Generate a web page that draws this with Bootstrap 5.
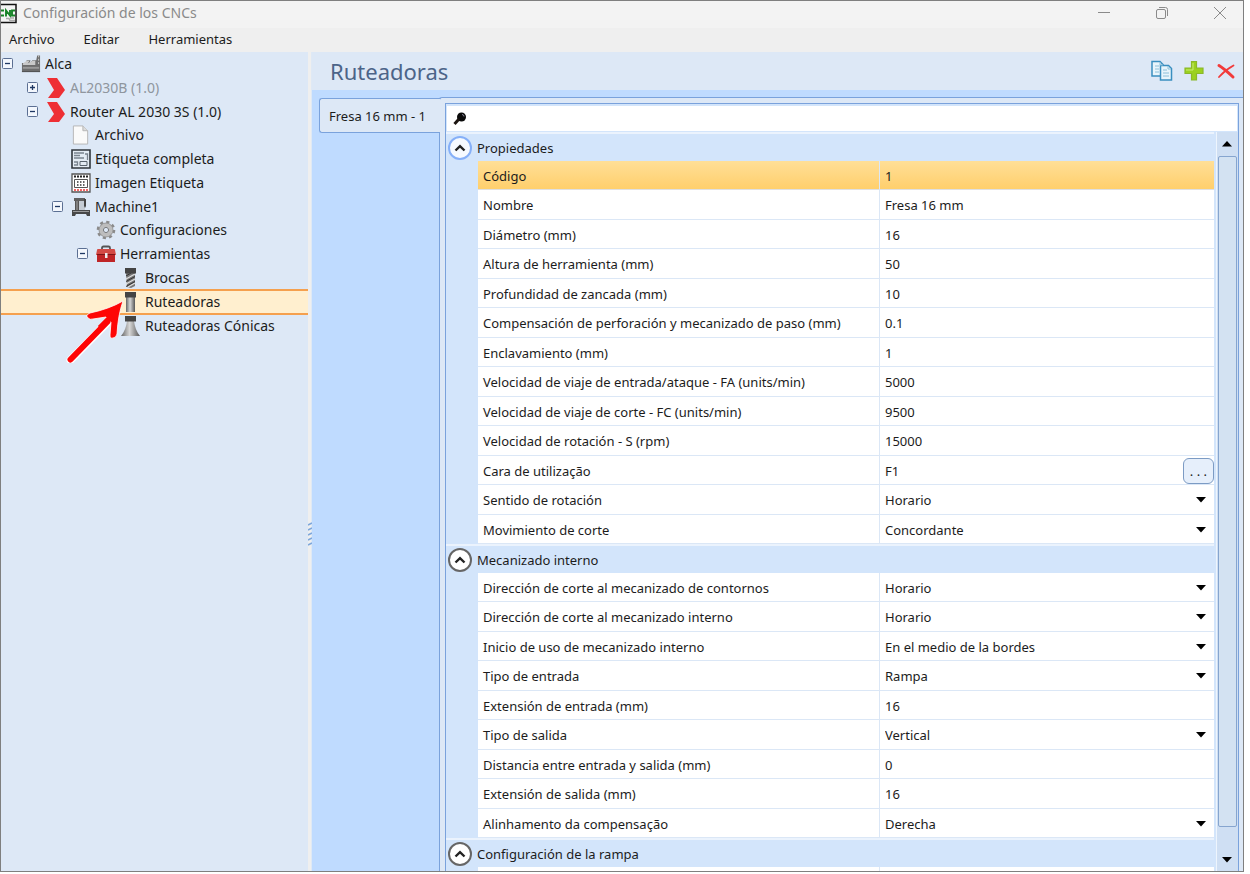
<!DOCTYPE html>
<html lang="es">
<head>
<meta charset="utf-8">
<meta name="viewport" content="width=device-width, initial-scale=1">
<title>Configuración de los CNCs</title>
<link href="https://cdn.jsdelivr.net/npm/bootstrap@5.3.0/dist/css/bootstrap.min.css" rel="stylesheet">
<style>
  :root { --pane:#dde8f6; --sky:#bfdbff; --head:#d3e5fb; --edge:#7aa2dc; --rule:#dbe7f6; }
  body { font-family:"Noto Sans","Open Sans",sans-serif; font-size:13px; line-height:20px; color:#1c1c1c; height:100vh; padding:0 6px 2px 0; background:#fff; overflow:hidden; }
  button { color:inherit; background:none; border:0; padding:0; }
  svg { display:block; flex:none; }
  .frame { border:1px solid #7f7f7f; }
  .title-bar { height:27px; background:#f3f3f3; color:#8a8a8a; padding-bottom:3px; }
  .title-bar h1 { font-size:14px; line-height:20px; font-weight:400; margin-left:6px; }
  .win-btns { gap:44px; padding-right:16px; }
  .menu-bar { height:24px; background:#efefef; padding:0 0 2px 8px; gap:29px; }
  .menu-bar a { color:#1c1c1c; text-decoration:none; }
  .side { width:307px; background:var(--pane); font-size:14px; }
  .split { width:4px; background:#efefef; border-right:1px solid #dfe9f5; }
  .split svg { margin-top:144px; overflow:visible; }
  .node { height:24px; padding-left:calc(25px * var(--lv)); }
  .node:nth-child(4n+3) { height:23px; }
  .lv0{--lv:0}.lv1{--lv:1}.lv2{--lv:2}.lv3{--lv:3}.lv4{--lv:4}
  .twist { width:20px; height:20px; flex:none; }
  .node > svg { width:20px; height:20px; margin-right:4px; }
  .node a { color:inherit; text-decoration:none; white-space:nowrap; }
  .node.muted { color:#8f969e; }
  .node.picked { background:#ffefcf; box-shadow:inset 0 2px #f5a04e, inset 0 -2px #f5a04e; height:26px; margin:-1px 0; }
  .pointer { left:65px; top:245px; }
  .work { background:var(--sky); }
  .work-head { height:38px; background:var(--pane); padding:0 5px 0 18px; }
  .work-head h2 { font-size:22px; line-height:28px; font-weight:400; color:#4c6488; }
  .work-body { padding-top:7px; padding-left:7px; }
  .tool-tab { width:121px; height:35px; margin-top:1px; margin-right:-1px; background:var(--pane); border:1px solid var(--edge); border-right:0; border-radius:3px 0 0 3px; z-index:1; padding-left:9px; text-align:left; white-space:nowrap; }
  .panel { background:var(--pane); border:solid var(--edge); border-width:1px 0 0 1px; padding:5px 4px 0 5px; border-top-left-radius:3px; }
  .inner { border:solid var(--edge); border-width:1px 1px 0; background:var(--head); }
  .search { height:25px; margin:2px 1px 1px; background:#fff; padding-left:6px; }
  .search input { border:0; outline:0; background:none; height:20px; }
  .group { border-top:2px solid #ebf3fd; }
  .group-head { height:27px; padding-left:2px; gap:5px; }
  .group-head h3 { font-size:13px; line-height:20px; font-weight:400; }
  .round { width:24px; height:24px; border:2px solid #666; border-radius:50%; background:#fff; display:grid; place-items:center; flex:none; }
  .round.hot { border-color:#86b0f8; background:#f6faff; }
  .props { width:calc(100% - 32px); margin-left:32px; table-layout:fixed; border-collapse:separate; border-spacing:0; background:#fff; }
  .props th, .props td { height:29px; padding:1px 0 0 5px; font-weight:400; border-bottom:1px solid var(--rule); white-space:nowrap; vertical-align:middle; }
  .props th { width:402px; border-right:1px solid var(--rule); }
  .props tr:nth-child(even) > * { height:30px; }
  .props tr.sel > * { background:linear-gradient(#ffdf97,#ffcf6c); border-bottom-color:#dfe0e2; }
  .props select { width:100%; height:20px; padding:0; border:0; border-radius:0; font-size:13px; line-height:20px; color:inherit; background-color:transparent;
    --bs-form-select-bg-img:url("data:image/svg+xml,%3Csvg xmlns='http://www.w3.org/2000/svg' viewBox='0 0 10 6'%3E%3Cpath d='M0 0h10L5 5.500z'/%3E%3C/svg%3E");
    background-size:10px 6px; background-position:right 8px center; }
  .more { width:31px; height:26px; border:1px solid #7c9bc4; border-radius:6px; background:#e6effb; }
  .scroll { width:22px; background:#cfdff3; border-left:1px solid #eef5fd; padding:0 1px; margin-left:2px; }
  .scroll .thumb { border:1px solid #86a5cf; border-radius:2px; background:#d3e2f2; }
  .scroll button { height:24px; display:grid; place-items:center; }
  .scroll .down { height:44px; padding-top:21px; }
</style>
</head>
<body>
<svg width="0" height="0" class="position-absolute" aria-hidden="true">
  <defs>
    <linearGradient id="steel"><stop offset="0" stop-color="#666"/><stop offset=".45" stop-color="#d6d6d6"/><stop offset="1" stop-color="#555"/></linearGradient>
    <symbol id="minus" viewBox="0 0 20 20"><rect x="1.500" y="4.500" width="10" height="10" rx="1" fill="#f3f7fd" stroke="#5b6f93"/><path d="M4 9.500h5" stroke="#1f3864" stroke-width="1.300"/></symbol>
    <symbol id="plus" viewBox="0 0 20 20"><rect x="1.500" y="4.500" width="10" height="10" rx="1" fill="#f3f7fd" stroke="#5b6f93"/><path d="M4 9.500h5M6.500 7v5" stroke="#1f3864" stroke-width="1.300"/></symbol>
    <symbol id="chev" viewBox="0 0 20 20"><path d="M1 0h10l8 12-6 8H2l6-8z" fill="#ee2f34"/></symbol>
    <symbol id="up" viewBox="0 0 12 8"><path d="M1.500 6.500 6 2.200l4.500 4.300" fill="none" stroke="#222" stroke-width="2.400"/></symbol>
  </defs>
</svg>
<div class="frame d-flex flex-column h-100 overflow-hidden">
  <header class="title-bar d-flex align-items-center flex-shrink-0">
    <svg width="16" height="21" viewBox="0 0 16 21"><path d="M-2 1.500h17v18H-2z" fill="#f4f4f4" stroke="#111" stroke-width="1.500"/><path d="M3 7.500H0M3 12.500H0M5 13.500V7.500L9 12.500V7M14 7.500h-3v5h3" fill="none" stroke="#168326" stroke-width="1.900"/><path d="M5 15.500h3l1 2h5M9 15h4" stroke="#aaa" stroke-width="1.500" fill="none"/></svg>
    <h1 class="mb-0 me-auto">Configuración de los CNCs</h1>
    <div class="win-btns d-flex align-items-center">
      <button aria-label="Minimizar"><svg width="14" height="14" viewBox="0 0 14 14"><path d="M1 6.500h12" stroke="#8a8a8a"/></svg></button>
      <button aria-label="Restaurar"><svg width="14" height="14" viewBox="0 0 14 14" fill="none" stroke="#8a8a8a"><rect x="1.500" y="3.500" width="9" height="9" rx="1.500"/><path d="M4 1.500h6.500a2 2 0 0 1 2 2V10"/></svg></button>
      <button aria-label="Cerrar"><svg width="14" height="14" viewBox="0 0 14 14"><path d="m1 1 12 12M13 1 1 13" stroke="#8a8a8a"/></svg></button>
    </div>
  </header>
  <nav class="menu-bar d-flex align-items-center flex-shrink-0"><a href="#">Archivo</a><a href="#">Editar</a><a href="#">Herramientas</a></nav>

  <div class="d-flex flex-grow-1 overflow-hidden">
    <aside class="side position-relative flex-shrink-0">
      <ul class="list-unstyled mb-0">
        <li class="node lv0 d-flex align-items-center"><button class="twist" aria-label="Contraer"><svg width="20" height="20"><use href="#minus"/></svg></button>
          <svg viewBox="0 0 21 20"><path d="M1 9h4l1-3h4L9 9l3-3h4l1-5h3v17H1z" fill="#6d6d6d"/><path d="M2 9.500 6 6.500h3L7 9.500l5-3h3V11H2z" fill="#c9c9c9"/><path d="M18.500 1v9" stroke="#ccc" stroke-dasharray="2 1.500"/><path d="M2 14h17" stroke="#999" stroke-width="2"/><path d="M1 18h19" stroke="#444"/></svg><a href="#">Alca</a></li>
        <li class="node lv1 muted d-flex align-items-center"><button class="twist" aria-label="Expandir"><svg width="20" height="20"><use href="#plus"/></svg></button><svg><use href="#chev"/></svg><a href="#">AL2030B (1.0)</a></li>
        <li class="node lv1 d-flex align-items-center"><button class="twist" aria-label="Contraer"><svg width="20" height="20"><use href="#minus"/></svg></button><svg><use href="#chev"/></svg><a href="#">Router AL 2030 3S (1.0)</a></li>
        <li class="node lv2 d-flex align-items-center"><span class="twist"></span>
          <svg viewBox="0 0 21 20"><path d="M2.500.5h10l5 5v14h-15z" fill="#fafafa" stroke="#b5b5b5"/><path d="M12.500.5v5h5" fill="#ddd" stroke="#b5b5b5"/></svg><a href="#">Archivo</a></li>
        <li class="node lv2 d-flex align-items-center"><span class="twist"></span>
          <svg viewBox="0 0 20 20" fill="none"><path d="M1 1h18v18H1z" fill="#e4ecf4" stroke="#30363c" stroke-width="1.600"/><path d="M3 4h10M3 6.500h6M3 9h10M14 5h2.500v6M3 13h3.500v3H3" stroke="#7a848f" stroke-width="1.300"/><path d="M9 12.500h7v4H9z" stroke="#5a646f"/></svg><a href="#">Etiqueta completa</a></li>
        <li class="node lv2 d-flex align-items-center"><span class="twist"></span>
          <svg viewBox="0 0 20 20" fill="none"><path d="M1 1h18v18H1z" fill="#fff" stroke="#555" stroke-width="1.300"/><path d="M3 3.500h14" stroke="#222" stroke-width="2" stroke-dasharray="2 1"/><path d="M3.500 6.500h13v8h-13z" stroke="#555"/><path d="M6 9h8M6 12h8" stroke="#333" stroke-width="1.300" stroke-dasharray="1.500 1.500"/><path d="M3 17h14" stroke="#e33" stroke-width="1.500" stroke-dasharray="2 1"/></svg><a href="#">Imagen Etiqueta</a></li>
        <li class="node lv2 d-flex align-items-center"><button class="twist" aria-label="Contraer"><svg width="20" height="20"><use href="#minus"/></svg></button>
          <svg viewBox="0 0 20 20"><path d="M4 3h5v10H4z" fill="#555"/><path d="M3 1h11v3H3z" fill="#606060"/><path d="M8 4h6v9H8z" fill="#c5ccd4"/><path d="M13 2h2v7l-1 2-1-2z" fill="#444"/><path d="M6 4v9" stroke="#aaa"/><path d="M1 13h18v6h-3l-1-2H5l-1 2H1z" fill="#484848"/><path d="M2 14.500h16" stroke="#999"/></svg><a href="#">Machine1</a></li>
        <li class="node lv3 d-flex align-items-center"><span class="twist"></span>
          <svg viewBox="0 0 20 20" fill="none"><circle cx="10" cy="10" r="8" stroke="#8a8a8a" stroke-width="2.600" stroke-dasharray="3.140 3.140"/><circle cx="10" cy="10" r="5" stroke="#bdbdbd" stroke-width="4"/><circle cx="10" cy="10" r="7" stroke="#8d8d8d" stroke-width=".8"/><circle cx="10" cy="10" r="2.600" fill="#dde8f6" stroke="#777"/></svg><a href="#">Configuraciones</a></li>
        <li class="node lv3 d-flex align-items-center"><button class="twist" aria-label="Contraer"><svg width="20" height="20"><use href="#minus"/></svg></button>
          <svg viewBox="0 0 20 20"><path d="M6 6V4q0-1.500 1.500-1.500h5Q14 2.500 14 4v2" fill="none" stroke="#555" stroke-width="1.800"/><path d="M1 6q0-1 1-1h16q1 0 1 1l1 5H0z" fill="#d34a45"/><path d="M1 11h18v7H1z" fill="#bf2527"/><path d="M1 10.500h18" stroke="#7d1518"/><path d="M9 9h2.500v5H9z" fill="#eee"/></svg><a href="#">Herramientas</a></li>
        <li class="node lv4 d-flex align-items-center"><span class="twist"></span>
          <svg viewBox="0 0 20 20"><path d="M5 5h9v13l-4 2-4-1z" fill="#777"/><path d="m5 11 9-5M5 16l9-5M7 19l7-4" stroke="#ddd" stroke-width="1.400"/><path d="m5 8 5-3M5 13.500l9-5M5 18.500l9-5" stroke="#333"/><path d="M4 0h11v5.500H4z" fill="#444"/></svg><a href="#">Brocas</a></li>
        <li class="node lv4 picked d-flex align-items-center"><span class="twist"></span>
          <svg viewBox="0 0 20 20"><path d="M5 5h9v15H5z" fill="url(#steel)"/><path d="M4 0h11v5.500H4z" fill="#444"/></svg><a href="#">Ruteadoras</a></li>
        <li class="node lv4 d-flex align-items-center"><span class="twist"></span>
          <svg viewBox="0 0 20 20"><path d="M6 5h7q1 9 6 15H0Q5 14 6 5z" fill="url(#steel)"/><path d="M4 0h11v5.500H4z" fill="#444"/></svg><a href="#">Ruteadoras Cónicas</a></li>
      </ul>
      <svg class="pointer position-absolute" width="60" height="66" viewBox="0 0 60 66"><path d="M4.500 63 44 23" stroke="#fff" stroke-width="8" stroke-linecap="round"/><path d="M4.500 62.500 45 21" stroke="#fe0505" stroke-width="6" stroke-linecap="round"/><path d="M57 4Q43 12 24 16q-5 2-2 5 2 2 5 1l13-2q2 3 5 5l-1 13q0 4 3 3 3 0 4-4Q52 18 57 4z" fill="#fe0505" stroke="#fff" stroke-width=".8"/><path d="M34 31 46 19" stroke="#fe0505" stroke-width="6"/></svg>
    </aside>
    <div class="split d-flex align-items-center flex-shrink-0"><svg width="4" height="24" viewBox="0 0 4 24"><path d="m0 3 4-2M0 8l4-2M0 13l4-2M0 18l4-2M0 23l4-2" stroke="#7fa8dc" stroke-width="1.600"/></svg></div>

    <main class="work flex-grow-1 d-flex flex-column overflow-hidden">
      <div class="work-head d-flex align-items-center flex-shrink-0">
        <h2 class="mb-0 me-auto">Ruteadoras</h2>
        <div class="d-flex gap-2 align-items-center">
          <button aria-label="Copiar"><svg width="24" height="22" viewBox="0 0 24 22"><path d="M2 1.500h8l3 3V16H2z" fill="#e8f5fb" stroke="#3a8fc0" stroke-width="1.500"/><path d="M10.500 5.500h8l3 3V20h-11z" fill="#e8f5fb" stroke="#3a8fc0" stroke-width="1.500"/><path d="M5 6h4M5 9h4M5 12h4M13 10h4M13 13h6M13 16h6M10 2v3h3M18 6v3h3" stroke="#8cc0da" fill="none"/></svg></button>
          <button aria-label="Agregar"><svg width="24" height="22" viewBox="0 0 24 22"><path d="M9.500 1.500h5V8H21v5.500h-6.500V20h-5v-6.500H3V8h6.500z" fill="#9bd11f" stroke="#8ab82a" stroke-width="1.200"/><path d="M4 10h7V3" stroke="#c9ec74" fill="none"/></svg></button>
          <button aria-label="Eliminar"><svg width="24" height="22" viewBox="0 0 24 22" fill="none" stroke="#f23a3a" stroke-linecap="round"><path d="M5 5.500q5 3 14 11.500" stroke-width="3"/><path d="M19.500 5.500Q11 10 5 17" stroke-width="1.800"/></svg></button>
        </div>
      </div>
      <div class="work-body d-flex flex-grow-1 overflow-hidden">
        <button class="tool-tab flex-shrink-0 position-relative">Fresa 16 mm - 1</button>
        <div class="panel flex-grow-1 d-flex overflow-hidden">
          <div class="inner flex-grow-1 d-flex flex-column overflow-hidden">
            <label class="search d-flex align-items-center flex-shrink-0">
              <svg width="14" height="14" viewBox="0 0 14 14"><circle cx="8.500" cy="5" r="4.500" fill="#0a0a0a"/><path d="M6 7 1.500 12" stroke="#1c1410" stroke-width="3"/><path d="M9 2.500q2 0 2 2" stroke="#889" fill="none"/></svg>
              <input type="text" class="flex-grow-1" aria-label="Buscar">
            </label>
            <div class="d-flex flex-grow-1 overflow-hidden">
              <div class="flex-grow-1 overflow-hidden">
                <section class="group">
                  <div class="group-head d-flex align-items-center"><button class="round hot" aria-label="Contraer Propiedades"><svg width="12" height="8"><use href="#up"/></svg></button><h3 class="mb-0">Propiedades</h3></div>
                  <table class="props">
                    <tr class="sel"><th scope="row">Código</th><td>1</td></tr>
                    <tr><th scope="row">Nombre</th><td>Fresa 16 mm</td></tr>
                    <tr><th scope="row">Diámetro (mm)</th><td>16</td></tr>
                    <tr><th scope="row">Altura de herramienta (mm)</th><td>50</td></tr>
                    <tr><th scope="row">Profundidad de zancada (mm)</th><td>10</td></tr>
                    <tr><th scope="row">Compensación de perforación y mecanizado de paso (mm)</th><td>0.1</td></tr>
                    <tr><th scope="row">Enclavamiento (mm)</th><td>1</td></tr>
                    <tr><th scope="row">Velocidad de viaje de entrada/ataque - FA (units/min)</th><td>5000</td></tr>
                    <tr><th scope="row">Velocidad de viaje de corte - FC (units/min)</th><td>9500</td></tr>
                    <tr><th scope="row">Velocidad de rotación - S (rpm)</th><td>15000</td></tr>
                    <tr><th scope="row">Cara de utilização</th><td><div class="d-flex align-items-center justify-content-between">F1<button class="more" aria-label="Elegir cara">. . .</button></div></td></tr>
                    <tr><th scope="row"><label for="giro">Sentido de rotación</label></th><td><select id="giro" class="form-select"><option>Horario</option></select></td></tr>
                    <tr><th scope="row"><label for="mov">Movimiento de corte</label></th><td><select id="mov" class="form-select"><option>Concordante</option></select></td></tr>
                  </table>
                </section>
                <section class="group">
                  <div class="group-head d-flex align-items-center"><button class="round" aria-label="Contraer Mecanizado interno"><svg width="12" height="8"><use href="#up"/></svg></button><h3 class="mb-0">Mecanizado interno</h3></div>
                  <table class="props">
                    <tr><th scope="row"><label for="dcont">Dirección de corte al mecanizado de contornos</label></th><td><select id="dcont" class="form-select"><option>Horario</option></select></td></tr>
                    <tr><th scope="row"><label for="dint">Dirección de corte al mecanizado interno</label></th><td><select id="dint" class="form-select"><option>Horario</option></select></td></tr>
                    <tr><th scope="row"><label for="ini">Inicio de uso de mecanizado interno</label></th><td><select id="ini" class="form-select"><option>En el medio de la bordes</option></select></td></tr>
                    <tr><th scope="row"><label for="ent">Tipo de entrada</label></th><td><select id="ent" class="form-select"><option>Rampa</option></select></td></tr>
                    <tr><th scope="row">Extensión de entrada (mm)</th><td>16</td></tr>
                    <tr><th scope="row"><label for="sal">Tipo de salida</label></th><td><select id="sal" class="form-select"><option>Vertical</option></select></td></tr>
                    <tr><th scope="row">Distancia entre entrada y salida (mm)</th><td>0</td></tr>
                    <tr><th scope="row">Extensión de salida (mm)</th><td>16</td></tr>
                    <tr><th scope="row"><label for="ali">Alinhamento da compensação</label></th><td><select id="ali" class="form-select"><option>Derecha</option></select></td></tr>
                  </table>
                </section>
                <section class="group">
                  <div class="group-head d-flex align-items-center"><button class="round" aria-label="Contraer Configuración de la rampa"><svg width="12" height="8"><use href="#up"/></svg></button><h3 class="mb-0">Configuración de la rampa</h3></div>
                  <table class="props"><tr><th scope="row"></th><td></td></tr></table>
                </section>
              </div>
              <div class="scroll flex-shrink-0 d-flex flex-column">
                <button aria-label="Subir"><svg width="10" height="6" viewBox="0 0 10 6"><path d="M0 5.500h10L5 0z"/></svg></button>
                <div class="thumb flex-grow-1"></div>
                <button class="down" aria-label="Bajar"><svg width="10" height="6" viewBox="0 0 10 6"><path d="M0 0h10L5 5.500z"/></svg></button>
              </div>
            </div>
          </div>
        </div>
      </div>
    </main>
  </div>
</div>
<script src="https://cdn.jsdelivr.net/npm/bootstrap@5.3.0/dist/js/bootstrap.bundle.min.js"></script>
</body>
</html>
